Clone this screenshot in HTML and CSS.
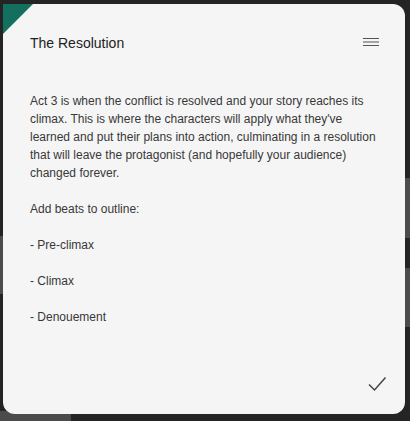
FILE: index.html
```html
<!DOCTYPE html>
<html lang="en">
<head>
    <meta charset="UTF-8">
    <meta name="viewport" content="width=device-width, initial-scale=1.0">
    <title>The Resolution</title>
    <link rel="stylesheet" href="styles.css">
</head>
<body>
<div class="modal">
    <header class="modal-header">
        <h2 class="modal-title">The Resolution</h2>
        <button class="menu-btn" aria-label="Menu">
            <svg width="16" height="10" viewBox="0 0 16 10">
                <path d="M0 1.5H16M0 5H16M0 8.5H16" stroke="#555" stroke-width="1.2" fill="none"/>
            </svg>
        </button>
    </header>
    <div class="modal-body">Act 3 is when the conflict is resolved and your story reaches its climax. This is where the characters will apply what they've learned and put their plans into action, culminating in a resolution that will leave the protagonist (and hopefully your audience) changed forever.

Add beats to outline:

- Pre-climax

- Climax

- Denouement</div>
    <footer class="modal-footer">
        <button class="done-btn" aria-label="Done">
            <svg width="19" height="16" viewBox="0 0 19 16">
                <path d="M1 8.5L6.5 14L17.5 1.5" stroke="#444" stroke-width="1.5" fill="none"/>
            </svg>
        </button>
    </footer>
</div>
</body>
</html>
```

FILE: styles.css
```css
html, body {
    height: 100%;
}

body {
    margin: 0;
    overflow: hidden;
    font-family: "Liberation Sans", Arial, sans-serif;
    color: #333;
    background-color: #242424;
    background-image:
        linear-gradient(#4b4b4b, #4b4b4b),
        linear-gradient(#4b4b4b, #4b4b4b),
        linear-gradient(#4b4b4b, #4b4b4b),
        linear-gradient(#4b4b4b, #4b4b4b);
    background-repeat: no-repeat;
    background-size: 10px 60px, 10px 59px, 10px 58px, 71px 10px;
    background-position: right 0 top 178px, right 0 top 268px, left 0 top 236px, left 0 bottom 0;
}

.modal {
    position: relative;
    box-sizing: border-box;
    display: flex;
    flex-direction: column;
    width: 402px;
    height: 410px;
    margin: 4px 0 0 3px;
    background: #f5f5f5;
    border-radius: 0 12px 12px 12px;
}

/* coin vert en haut a gauche */
.modal::before {
    content: "";
    position: absolute;
    top: 0;
    left: 0;
    width: 30px;
    height: 30px;
    background: #13705f;
    clip-path: polygon(0 0, 100% 0, 0 100%);
}

.modal-header {
    display: flex;
    align-items: center;
    justify-content: space-between;
    height: 22px;
    padding: 28px 26px 0 27px;
}

.modal-title {
    margin: 0;
    font-size: 14px;
    font-weight: normal;
    color: #222;
}

.menu-btn, .done-btn {
    display: flex;
    padding: 0;
    border: none;
    background: none;
    cursor: pointer;
}

.menu-btn {
    margin-top: -3px;
}

.modal-body {
    margin-top: 38px;
    padding: 0 27px;
    font-size: 12px;
    line-height: 18px;
    color: #383838;
    white-space: pre-line;
}

.modal-footer {
    display: flex;
    justify-content: flex-end;
    margin-top: auto;
    padding: 0 18px 22px 0;
}
```
